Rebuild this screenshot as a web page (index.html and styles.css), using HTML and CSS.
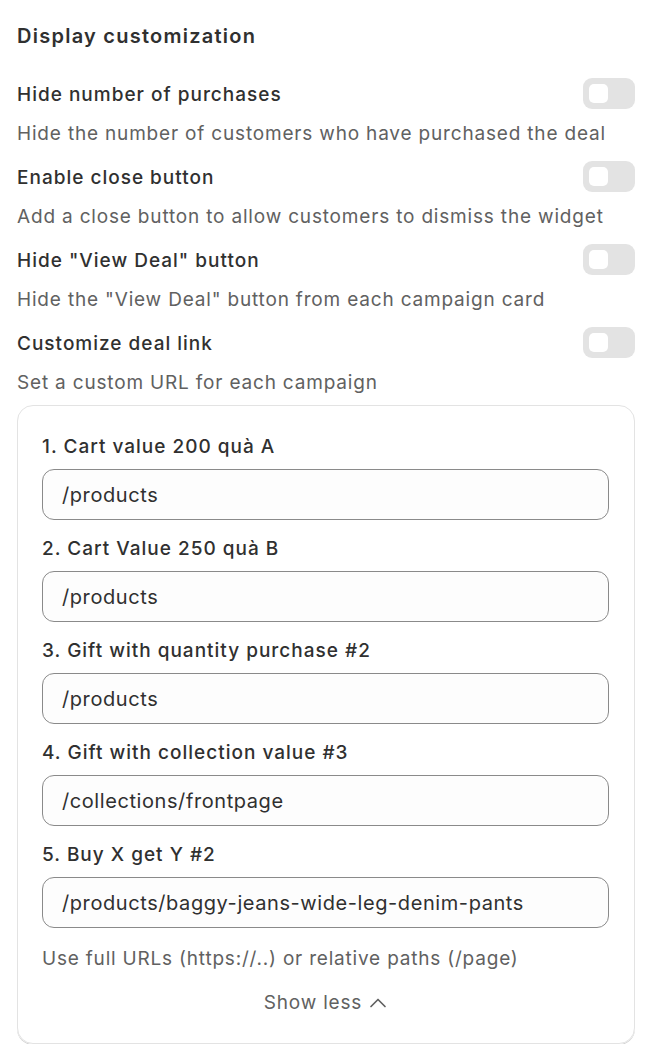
FILE: index.html
```html
<!DOCTYPE html>
<html lang="en">
<head>
<meta charset="utf-8">
<title>Display customization</title>
<link rel="stylesheet" href="styles.css">
</head>
<body>
<div class="panel">
  <h2 class="title">Display customization</h2>

  <div class="setting">
    <div class="setting-head">
      <span class="setting-label">Hide number of purchases</span>
      <span class="toggle"><span class="knob"></span></span>
    </div>
    <p class="setting-desc">Hide the number of customers who have purchased the deal</p>
  </div>

  <div class="setting">
    <div class="setting-head">
      <span class="setting-label">Enable close button</span>
      <span class="toggle"><span class="knob"></span></span>
    </div>
    <p class="setting-desc">Add a close button to allow customers to dismiss the widget</p>
  </div>

  <div class="setting">
    <div class="setting-head">
      <span class="setting-label">Hide "View Deal" button</span>
      <span class="toggle"><span class="knob"></span></span>
    </div>
    <p class="setting-desc">Hide the "View Deal" button from each campaign card</p>
  </div>

  <div class="setting setting-last">
    <div class="setting-head">
      <span class="setting-label">Customize deal link</span>
      <span class="toggle"><span class="knob"></span></span>
    </div>
    <p class="setting-desc">Set a custom URL for each campaign</p>
  </div>

  <div class="card">
    <div class="field">
      <label class="field-label">1. Cart value 200 quà A</label>
      <div class="input">/products</div>
    </div>
    <div class="field">
      <label class="field-label">2. Cart Value 250 quà B</label>
      <div class="input">/products</div>
    </div>
    <div class="field">
      <label class="field-label">3. Gift with quantity purchase #2</label>
      <div class="input">/products</div>
    </div>
    <div class="field">
      <label class="field-label">4. Gift with collection value #3</label>
      <div class="input">/collections/frontpage</div>
    </div>
    <div class="field">
      <label class="field-label">5. Buy X get Y #2</label>
      <div class="input">/products/baggy-jeans-wide-leg-denim-pants</div>
    </div>
    <p class="help">Use full URLs (https://..) or relative paths (/page)</p>
    <div class="show-less">
      <span>Show less</span>
      <svg class="chev" width="18" height="18" viewBox="0 0 18 18" aria-hidden="true"><path d="M2 12.5 L9 5.5 L16 12.5" fill="none" stroke="#616161" stroke-width="1.7" stroke-linecap="round" stroke-linejoin="round"/></svg>
    </div>
  </div>
</div>
</body>
</html>
```

FILE: styles.css
```css
html, body {
  margin: 0;
  padding: 0;
  background: #ffffff;
}
body {
  font-family: Inter, "Noto Sans", "Liberation Sans", sans-serif;
  color: #303030;
  font-size: 19px;
}
.panel {
  padding: 21px 19px 0 17px;
}
.title {
  margin: 0 0 27px;
  font-size: 20px;
  line-height: 30px;
  font-weight: 600;
  letter-spacing: 1.25px;
}
.setting {
  margin-bottom: 14px;
}
.setting-last {
  margin-bottom: 9px;
}
.setting-head {
  display: flex;
  align-items: center;
  justify-content: space-between;
  height: 31px;
}
.setting-label {
  font-weight: 500;
  line-height: 26px;
  letter-spacing: 1px;
  padding-top: 2px;
}
.toggle {
  width: 52px;
  height: 31px;
  border-radius: 9px;
  background: #e3e3e3;
  display: flex;
  align-items: center;
  padding-left: 6px;
  box-sizing: border-box;
}
.knob {
  width: 19px;
  height: 19px;
  border-radius: 5px;
  background: #ffffff;
}
.setting-desc {
  margin: 12px 0 0;
  line-height: 26px;
  color: #616161;
  letter-spacing: 0.82px;
}
.card {
  border: 1px solid #e3e3e3;
  border-radius: 16px;
  box-shadow: 0 1px 0 #d4d4d4;
  padding: 28px 25px 27px 24px;
  display: flex;
  flex-direction: column;
  gap: 16px;
}
.field {
  display: flex;
  flex-direction: column;
  gap: 9px;
}
.field-label {
  font-weight: 500;
  line-height: 26px;
  letter-spacing: 1px;
}
.input {
  height: 51px;
  box-sizing: border-box;
  border: 1px solid #8a8a8a;
  border-radius: 12px;
  background: #fdfdfd;
  padding: 0 19px;
  display: flex;
  align-items: center;
  line-height: 26px;
  font-size: 20px;
  letter-spacing: 0.58px;
}
.help {
  margin: 2px 0 0;
  line-height: 26px;
  color: #616161;
  letter-spacing: 0.8px;
}
.show-less {
  margin-top: 2px;
  display: flex;
  justify-content: center;
  align-items: center;
  gap: 7px;
  line-height: 26px;
  color: #616161;
  letter-spacing: 0.8px;
}
.chev {
  display: block;
}
```
